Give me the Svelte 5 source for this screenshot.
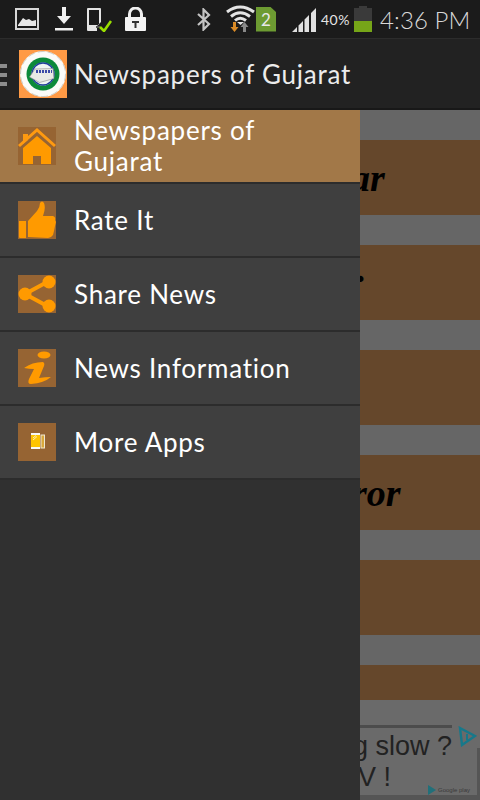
<script lang='ts'>
  const items = [
    { id: 'home', label: 'Newspapers of Gujarat', active: true },
    { id: 'rate', label: 'Rate It' },
    { id: 'share', label: 'Share News' },
    { id: 'info', label: 'News Information' },
    { id: 'apps', label: 'More Apps' },
  ]

  // brown bands behind the drawer, only the tail of each title is visible
  const bands = [
    { text: 'ar', pad: -9, lift: 0, h: 75 },
    { text: '.', pad: -3, lift: 28, h: 75 },
    { text: '', pad: 0, lift: 0, h: 75 },
    { text: 'ror', pad: -8, lift: 0, h: 75 },
    { text: '', pad: 0, lift: 0, h: 75 },
    { text: '', pad: 0, lift: 0, h: 35 },
  ]
</script>

<div class='screen'>
  <header class='status'>
    <svg class='s-pic' width='24' height='22' viewBox='0 0 24 22' aria-hidden='true'>
      <rect x='1' y='1' width='22' height='20' fill='none' stroke='#d8d8d8' stroke-width='2' />
      <path d='M3 17 L8 10 L11 12 L14 11 L17 13 L21 12 V18 H3Z' fill='#e8e8e8' />
    </svg>
    <svg class='s-dl' width='18' height='24' viewBox='0 0 18 24' aria-hidden='true'>
      <path d='M7 0H11V9H16L9 17L2 9H7Z M0 21H18V23.500H0Z' fill='#f0f0f0' />
    </svg>
    <svg class='s-dev' width='26' height='25' viewBox='0 0 26 25' aria-hidden='true'>
      <path d='M2 1H14Q15 1 15 2V15L11 19V24H2Q1 24 1 23V2Q1 1 2 1Z M3 3V18H13V3Z' fill='#e4e4e4' fill-rule='evenodd' />
      <rect x='10' y='19' width='4' height='2' fill='#555' />
      <path d='M14 20L18 24L25 14' fill='none' stroke='#9be000' stroke-width='2.600' />
    </svg>
    <svg class='s-lock' width='21' height='24' viewBox='0 0 21 24' aria-hidden='true'>
      <path d='M4.500 11V7A6 6 0 0 1 16.500 7V11' fill='none' stroke='#f0f0f0' stroke-width='3' />
      <rect x='0' y='10' width='21' height='14' rx='1' fill='#f4f4f4' />
      <path d='M7 14H14V16H11.500V21H9.500V16H7Z' fill='#333' />
    </svg>
    <svg class='s-bt' width='15' height='23' viewBox='0 0 15 23' aria-hidden='true'>
      <path d='M2 6L13 16L7.500 21.500V1.500L13 7L2 17' fill='none' stroke='#c4c4c4' stroke-width='2.200' />
    </svg>
    <svg class='s-wifi' width='29' height='27' viewBox='0 0 29 27' aria-hidden='true'>
      <path d='M1 7Q14 -3 28 7 M5 11.500Q14 4 24 11.500 M9 15.500Q14 11 20 15.500' fill='none' stroke='#e4e4e4' stroke-width='3' />
      <path d='M14.500 20L11 17H18Z' fill='#e4e4e4' />
      <path d='M7 17H10V22H12.500L8.500 27L4.500 22H7Z' fill='#d98a26' />
      <path d='M17 27V22H14.500L18.500 17L22.500 22H20V27Z' fill='#888' />
    </svg>
    <div class='s-sim'>2</div>
    <svg class='s-signal' width='24' height='24' viewBox='0 0 24 24' aria-hidden='true'>
      <path d='M0 24L5 19V24Z M6.500 24V17.500L11 13V24Z M12.500 24V11.500L17 7V24Z M19 24V5L24 0V24Z' fill='#e0e0e0' />
    </svg>
    <span class='s-pct'>40%</span>
    <div class='s-batt'><div class='s-batt-fill'></div></div>
    <span class='s-time'>4:36 PM</span>
  </header>

  <div class='actionbar'>
    <div class='burger' aria-hidden='true'><i></i><i></i><i></i></div>
    <svg class='logo' width='48' height='48' viewBox='0 0 48 48' aria-hidden='true'>
      <rect width='48' height='48' fill='#ff9a45' />
      <circle cx='24' cy='24' r='23' fill='#fbfbf8' />
      <circle cx='24' cy='24' r='22.500' fill='none' stroke='#b9b9b0' stroke-width='0.700' stroke-dasharray='7 3' />
      <circle cx='24' cy='24' r='16.500' fill='#0c8a3a' />
      <circle cx='24' cy='24' r='11.500' fill='#eef4f2' />
      <circle cx='24' cy='24' r='11' fill='none' stroke='#1f3f9a' stroke-width='1.400' />
      <path d='M16 19L34 18.500L35 28.500L20.500 32.500L10.500 27Z' fill='#e8eae6' stroke='#8d8d8d' stroke-width='0.600' />
      <path d='M17 21.500H33' stroke='#3a4aa8' stroke-width='3' stroke-dasharray='2 1' />
    </svg>
    <h1>Newspapers of Gujarat</h1>
  </div>

  <main class='content'>
    <div class='gap first'></div>
    {#each bands as b, i (i)}
      <div class='band' style={`height:${b.h}px`}>
        {#if b.text}<span style={`margin-left:${b.pad}px; margin-bottom:${b.lift}px`}>{b.text}</span>{/if}
      </div>
      {#if i < bands.length - 1}<div class='gap'></div>{/if}
    {/each}
    <div class='gap last'></div>
    <div class='ad'>
      <div class='ad-rule'></div>
      <div class='ad-edge'></div>
      <div class='ad-line one'>g slow ?</div>
      <div class='ad-line two'>V !</div>
      <svg class='ad-mark' width='19' height='21' viewBox='0 0 19 21' aria-hidden='true'>
        <path d='M2 2L17 10L4 19Z' fill='none' stroke='#17788a' stroke-width='2.400' />
        <path d='M9 8V14' stroke='#17788a' stroke-width='2' />
      </svg>
      <div class='ad-play'>
        <svg width='8' height='10' viewBox='0 0 8 10' aria-hidden='true'><path d='M0 0L8 5L0 10Z' fill='#21707a' /></svg>
        <span>Google play</span>
      </div>
    </div>

    <nav class='drawer'>
      {#each items as item (item.id)}
        <div class='item' class:active={item.active}>
          <div class='icon'>
            {#if item.id === 'home'}
              <svg width='38' height='38' viewBox='0 0 38 38' aria-hidden='true'>
                <path d='M5 7H10V13L5 17Z' fill='#ff9a10' />
                <path d='M1 19L19 3L37 19' fill='none' stroke='#ff9a10' stroke-width='3' />
                <path fill-rule='evenodd' d='M19 9L33 21V37H5V21Z M15 29V37H23V29Z' fill='#ff9a00' />
              </svg>
            {:else if item.id === 'rate'}
              <svg width='38' height='38' viewBox='0 0 38 38' aria-hidden='true'>
                <path d='M1 20H8V37H2Q1 37 1 36Z' fill='#ff9a00' />
                <path d='M10 20L19 10Q22 6 22 2Q24 -1 26 2Q28 7 25 15H35Q38 16 37 19L38 21L37 25L36 30L35 34Q33 37 30 37L10 36Z' fill='#ff9a00' />
              </svg>
            {:else if item.id === 'share'}
              <svg width='38' height='38' viewBox='0 0 38 38' aria-hidden='true'>
                <path d='M7 19L31 6M7 19L31 32' stroke='#ff9a00' stroke-width='4' />
                <circle cx='31' cy='7' r='6.500' fill='#ff9a00' />
                <circle cx='7' cy='19' r='6.500' fill='#ff9a00' />
                <circle cx='31' cy='31' r='6.500' fill='#ff9a00' />
              </svg>
            {:else if item.id === 'info'}
              <svg width='38' height='38' viewBox='0 0 38 38' aria-hidden='true'>
                <ellipse cx='26' cy='6' rx='6.500' ry='3.500' fill='#ff9a00' />
                <path d='M6 19Q14 13 25 13Q27 14 26 17L21 29Q27 28 33 28Q26 34 13 35Q9 35 11 30L16 20Q11 20 6 19Z' fill='#ff9a00' />
              </svg>
            {:else}
              <svg width='38' height='38' viewBox='0 0 38 38' aria-hidden='true'>
                <rect x='23' y='12' width='3.500' height='13' fill='#d9a83a' stroke='#efe6d0' stroke-width='1' />
                <rect x='13' y='10' width='9' height='16' fill='#ffc400' />
                <path d='M13 11H22M13 25H22' stroke='#f8f8f8' stroke-width='2' />
                <path d='M15 15L18 12.500M15 17L19 13.500' stroke='#fff1b0' stroke-width='1' />
              </svg>
            {/if}
          </div>
          <span class='label'>{item.label}</span>
        </div>
      {/each}
    </nav>
  </main>
</div>

<style>
  :global(body) { margin: 0; background: #222; }

  .screen {
    position: relative;
    width: 480px;
    height: 800px;
    overflow: hidden;
    display: flex;
    flex-direction: column;
    font-family: 'Lato', 'Liberation Sans', sans-serif;
  }

  .status {
    height: 38px;
    flex-shrink: 0;
    display: flex;
    align-items: center;
    background: #1b1b1b;
    border-bottom: 1px solid #2c2c2c;
    box-sizing: content-box;
    color: #e4e4e4;
    padding-left: 15px;
  }
  .status svg { display: block; flex-shrink: 0; }
  .s-dl { margin-left: 16px; margin-top: -1px; }
  .s-dev { margin-left: 13px; }
  .s-lock { margin-left: 13px; }
  .s-bt { margin-left: 50px; margin-top: 1px; }
  .s-wifi { margin-left: 15px; margin-top: -2px; }
  .s-sim {
    width: 20px;
    height: 25px;
    margin-left: 1px;
    background: #6d9b32;
    clip-path: polygon(0 0, 70% 0, 100% 22%, 100% 100%, 0 100%);
    color: #e8e8e8;
    font-size: 17px;
    line-height: 25px;
    text-align: center;
  }
  .s-signal { margin-left: 16px; margin-top: 1px; }
  .s-pct {
    width: 33px;
    margin-left: 5px;
    font-size: 14px;
    letter-spacing: 0.5px;
  }
  .s-batt {
    position: relative;
    width: 18px;
    height: 24px;
    margin-top: 2px;
    background: #3a3a3a;
  }
  .s-batt::before {
    content: '';
    position: absolute;
    left: 5px;
    top: -2px;
    width: 8px;
    height: 2px;
    background: #3a3a3a;
  }
  .s-batt-fill { position: absolute; left: 0; right: 0; bottom: 0; height: 11px; background: #76a518; }
  .s-time {
    margin-left: 8px;
    font-size: 24px;
    font-weight: 300;
    letter-spacing: 0.1px;
    white-space: nowrap;
    color: #d8d8d8;
  }

  .actionbar {
    height: 69px;
    flex-shrink: 0;
    display: flex;
    align-items: center;
    background: #222;
    border-bottom: 2px solid #181818;
    padding-left: 19px;
    position: relative;
  }
  .burger {
    position: absolute;
    left: 0;
    top: 25px;
    display: flex;
    flex-direction: column;
    gap: 5px;
  }
  .burger i { display: block; width: 7px; height: 4px; background: #8c8c8c; }
  .logo { display: block; flex-shrink: 0; }
  .actionbar h1 {
    margin: 0 0 0 7px;
    font-size: 26px;
    font-weight: 400;
    letter-spacing: 0.75px;
    color: #ececec;
    white-space: nowrap;
  }

  .content {
    position: relative;
    flex: 1;
    display: flex;
    flex-direction: column;
    background: #666;
  }
  .gap { height: 30px; flex-shrink: 0; background: #666; }
  .gap.first { height: 30px; }
  .gap.last { height: 25px; background: #6a6a6a; }
  .band {
    flex-shrink: 0;
    box-sizing: border-box;
    padding-left: 360px;
    background: #65472b;
    display: flex;
    align-items: center;
    font-family: 'Liberation Serif', serif;
    font-style: italic;
    font-weight: 700;
    font-size: 38px;
    color: #000;
  }

  .ad {
    position: relative;
    height: 75px;
    flex-shrink: 0;
    background: #6a6a6a;
    color: #222;
    font-family: 'Liberation Sans', sans-serif;
    font-size: 27px;
  }
  .ad-rule { position: absolute; left: 340px; width: 112px; top: 0; height: 3px; background: #4c4c4c; }
  .ad-edge { position: absolute; left: 360px; right: 3px; bottom: 0; height: 5px; background: #555; }
  .ad-edge::after {
    content: '';
    position: absolute;
    left: 117px;
    bottom: 0;
    width: 3px;
    height: 52px;
    background: #555;
  }
  .ad-line { position: absolute; white-space: nowrap; line-height: 26px; }
  .ad-line.one { left: 353px; top: 8px; }
  .ad-line.two { left: 358px; top: 39px; }
  .ad-mark { position: absolute; right: 3px; top: 1px; }
  .ad-play {
    position: absolute;
    right: 10px;
    bottom: 5px;
    display: flex;
    align-items: center;
    gap: 2px;
    font-size: 6px;
    color: #3a3a3a;
  }

  .drawer {
    position: absolute;
    left: 0;
    top: 0;
    bottom: 0;
    width: 360px;
    display: flex;
    flex-direction: column;
    background: #303030;
  }
  .item {
    height: 72px;
    flex-shrink: 0;
    display: flex;
    align-items: center;
    padding-left: 18px;
    background: #3f3f3f;
    border-bottom: 2px solid #2c2c2c;
  }
  .item.active { background: #a27848; }
  .icon {
    width: 38px;
    height: 38px;
    flex-shrink: 0;
    background: #966433;
  }
  .icon svg { display: block; }
  .label {
    margin-left: 18px;
    width: 240px;
    font-size: 26px;
    line-height: 31px;
    letter-spacing: 0.75px;
    color: #fff;
  }
</style>
